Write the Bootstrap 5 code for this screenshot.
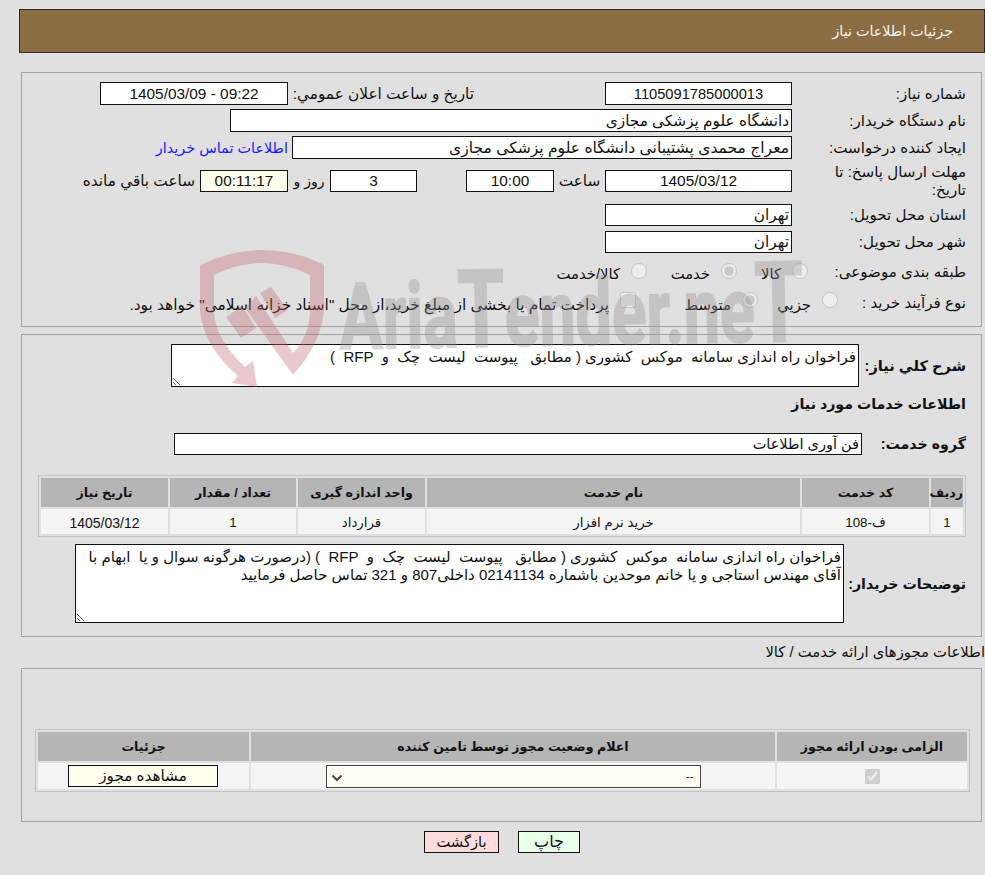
<!DOCTYPE html>
<html lang="fa" dir="rtl">
<head>
<meta charset="utf-8">
<title>جزئیات اطلاعات نیاز</title>
<link href="https://cdn.jsdelivr.net/npm/bootstrap@5.3.0/dist/css/bootstrap.min.css" rel="stylesheet">
<style>
html,body{background:#e0e0e0}
body{font-family:"Liberation Sans","DejaVu Sans",sans-serif;font-size:15.3px;line-height:18px;color:#111;min-height:875px;position:relative;overflow-x:hidden}
.page-wrap{width:985px}
.top-bar{margin:9px 0 19px 0;height:44px;width:966px;background:#8b6d43;border:1px solid #2b2b2b;color:#f4f4f4;padding-right:31px;display:flex;align-items:center;font-size:14.3px}
.sheet{width:961px;margin-right:3px;border:1px solid #a3a3a3;padding-right:15px}
.sheet-a{height:255px;padding-top:9px;margin-bottom:7px}
.sheet-b{height:303px;margin-bottom:7px;padding-top:9px}
.sheet-c{height:154px;margin-bottom:9px;padding:60px 11px 0 0}
.ln{display:flex;align-items:center;height:23px;margin-bottom:4px}
.ln-h{height:22px;margin-bottom:5px}
.tag{width:174px;flex:none;white-space:nowrap;font-size:15.1px}
.box{background:#fff;border:1px solid #111;height:100%;display:flex;align-items:center;padding:0 2px;flex:none;white-space:nowrap;overflow:hidden}
.box-c{justify-content:center;font-size:14.67px}
.dt{font-size:15.4px}
.w187{width:187px}.w188{width:188px}.w562{width:562px}.w500{width:500px;font-size:15.55px}.w88{width:88px}.w87{width:87px}
.cream{background:#ffffee}
.gap131{margin-right:131px;width:181px;flex:none;margin-left:5px;white-space:nowrap}
.hint{color:#1a1aff;margin-right:4px;text-decoration:none;white-space:nowrap;font-size:14.4px}
.deadline{height:22px;margin-top:11px;margin-bottom:12px}
.deadline .tag{white-space:normal;padding-left:30px}
.sp51,.sp49,.sp42{flex:none;text-align:center;white-space:nowrap}
.sp51{width:51px}.sp49{width:49px}.sp42{width:42px;font-size:14px}
.tail{margin-right:5px;white-space:nowrap}
.opt-row{display:flex;align-items:center;height:20px}
.o1{margin-top:9px}
.o2{margin-top:11px}
.t158{width:158px}.t128{width:128px}
.cell{display:flex;align-items:flex-start;flex:none;gap:11px;white-space:nowrap;font-size:14.8px;height:20px}
.cell input{margin:1px 0 0;width:16px;height:16px;flex:none}
.o2 .cell input{margin-top:-1px}
.cell span{margin-top:3px}
.cell .pay{font-size:15.4px}
.c71{width:71px}.c90{width:90px}.c80{width:80px}.c122{width:122px}
.sum{display:flex;align-items:center;height:43px}
.sum-t{width:107px;flex:none;font-weight:700;font-size:14.2px;white-space:nowrap}
.sum .sum-t{font-size:14.6px}
textarea.pad{background:#fff;border:1px solid #111;border-radius:0;font-family:inherit;font-size:15px;line-height:18px;color:#111;padding:3px 2px 0;display:block;white-space:pre-wrap;outline:0}
.ta1{width:688px;height:43px}
.ta2{width:769px;height:79px}
.head-b{font-weight:700;font-size:14.2px;margin:7px 0 19px;height:20px;display:flex;align-items:center}
.group{display:flex;align-items:center;height:22px;margin-bottom:20px}
.group .sum-t{width:104px}
.w688{width:688px;font-size:14.5px}
.grid-t{border-collapse:separate;border-spacing:2px;border:1px solid #c4c4c4;text-align:center;table-layout:fixed;margin:0;font-size:13.33px}
.grid-t th{background:#b5b5b5;height:29px;font-weight:700;padding:1px 0 0;color:#111;font-size:12.6px}
.grid-t td{background:#f5f5f5;height:25px;padding:2px 0 0;color:#111;vertical-align:middle}
.t1 td:last-child{font-size:14px}
.t1{width:928px}
.t2{width:935px}
.t2 td{height:26px;padding:0}
.t2 td:last-child{padding-right:1px}
.t2 input{width:15px;height:15px;margin:0;vertical-align:middle}
.buyer{display:flex;align-items:center;margin-top:7px}
.buyer .sum-t{width:122px}
.cap{height:16px;margin-bottom:8px;display:flex;align-items:center;white-space:nowrap;font-size:14.8px}
.pick{width:375px;height:23px;background:#fffff3 url("data:image/svg+xml,%3Csvg xmlns='http://www.w3.org/2000/svg' width='12' height='8'%3E%3Cpath d='M1.5 1.5 6 6l4.5-4.5' fill='none' stroke='%23444' stroke-width='2'/%3E%3C/svg%3E") no-repeat 4px 8px;appearance:none;border:1px solid #444;color:#111;font-size:11.5px;border-radius:0;font-family:inherit;display:block;margin:0 auto;padding:0 6px}
.view{width:150px;height:22px;background:#ffffee;border:1px solid #111;margin:0 auto;display:block;padding:0;border-radius:0;font-size:15.2px;line-height:18px;color:#111}
.acts{display:flex;gap:19px;padding-right:405px}
.act{height:22px;border:1px solid #111;border-radius:0;padding:0;font-size:14.67px;line-height:18px;color:#111}
.act-p{width:62px;background:#eaffea;font-size:16px}
.act-b{width:75px;background:#ffdcdc}
.stamp{position:absolute;left:190px;top:245px;pointer-events:none;z-index:5}
</style>
</head>
<body>
<div class="page-wrap">
  <div class="top-bar"><span>جزئیات اطلاعات نیاز</span></div>

  <div class="sheet sheet-a">
    <div class="ln"><div class="tag">شماره نیاز:</div><div class="box box-c w187">1105091785000013</div><div class="gap131">تاریخ و ساعت اعلان عمومي:</div><div class="box box-c dt w188">09:22 - 1405/03/09</div></div>
    <div class="ln"><div class="tag">نام دستگاه خریدار:</div><div class="box w562">دانشگاه علوم پزشکی مجازی</div></div>
    <div class="ln"><div class="tag">ایجاد کننده درخواست:</div><div class="box w500">معراج محمدی پشتیبانی دانشگاه علوم پزشکی مجازی</div><a class="hint" href="#">اطلاعات تماس خریدار</a></div>
    <div class="ln deadline"><div class="tag">مهلت ارسال پاسخ: تا تاریخ:</div><div class="box box-c dt w187">1405/03/12</div><span class="sp51">ساعت</span><div class="box box-c dt w88">10:00</div><span class="sp49"></span><div class="box box-c dt w87">3</div><span class="sp42">روز و</span><div class="box box-c dt w88 cream">00:11:17</div><span class="tail">ساعت باقي مانده</span></div>
    <div class="ln ln-h"><div class="tag">استان محل تحویل:</div><div class="box w187">تهران</div></div>
    <div class="ln ln-h"><div class="tag">شهر محل تحویل:</div><div class="box w187">تهران</div></div>
    <div class="opt-row o1"><div class="tag t158">طبقه بندی موضوعی:</div><label class="cell c71"><input type="radio" disabled name="kind"><span>کالا</span></label><label class="cell c90"><input type="radio" disabled checked name="kind"><span>خدمت</span></label><label class="cell"><input type="radio" disabled name="kind"><span>کالا/خدمت</span></label></div>
    <div class="opt-row o2"><div class="tag t128">نوع فرآیند خرید :</div><label class="cell c80"><input type="radio" disabled name="proc"><span>جزيي</span></label><label class="cell c122"><input type="radio" disabled checked name="proc"><span>متوسط</span></label><label class="cell"><input type="checkbox" disabled><span class="pay">پرداخت تمام یا بخشی از مبلغ خرید،از محل "اسناد خزانه اسلامی" خواهد بود.</span></label></div>
  </div>

  <div class="sheet sheet-b">
    <div class="sum"><div class="sum-t">شرح کلي نیاز:</div><textarea class="pad ta1" readonly>فراخوان راه اندازی سامانه  موکس  کشوری ( مطابق   پیوست  لیست  چک  و  RFP  )</textarea></div>
    <div class="head-b">اطلاعات خدمات مورد نیاز</div>
    <div class="group"><div class="sum-t">گروه خدمت:</div><div class="box w688">فن آوری اطلاعات</div></div>
    <table class="grid-t t1">
      <colgroup><col style="width:32px"><col style="width:127px"><col style="width:373px"><col style="width:127px"><col style="width:126px"><col></colgroup>
      <tr><th>ردیف</th><th>کد خدمت</th><th>نام خدمت</th><th>واحد اندازه گیری</th><th>تعداد / مقدار</th><th>تاریخ نیاز</th></tr>
      <tr><td>1</td><td>ف-108</td><td>خرید نرم افزار</td><td>قرارداد</td><td>1</td><td>1405/03/12</td></tr>
    </table>
    <div class="buyer"><div class="sum-t">توضیحات خریدار:</div><textarea class="pad ta2" readonly>فراخوان راه اندازی سامانه  موکس  کشوری ( مطابق   پیوست  لیست  چک  و  RFP  ) (درصورت هرگونه سوال و یا  ابهام با آقای مهندس استاجی و یا خانم موحدین باشماره 02141134 داخلی807 و 321 تماس حاصل فرمایید</textarea></div>
  </div>

  <div class="cap">اطلاعات مجوزهای ارائه خدمت / کالا</div>
  <div class="sheet sheet-c">
    <table class="grid-t t2">
      <colgroup><col style="width:190px"><col style="width:524px"><col></colgroup>
      <tr><th>الزامی بودن ارائه مجوز</th><th>اعلام وضعیت مجوز توسط تامین کننده</th><th>جزئیات</th></tr>
      <tr><td><input type="checkbox" checked disabled></td><td><select class="pick"><option>--</option></select></td><td><button type="button" class="view">مشاهده مجوز</button></td></tr>
    </table>
  </div>
  <div class="acts"><button type="button" class="act act-p">چاپ</button><button type="button" class="act act-b">بازگشت</button></div>
</div>
<svg class="stamp" width="700" height="145" viewBox="190 245 700 145" aria-hidden="true">
  <g opacity=".35">
    <path fill="#c3686e" d="M200 265Q232 250 262 250Q295 250 324 265L324 312Q320 345 293 375L245 308L256 296L293 353Q310 335 310 310L310 275Q285 263 262 263Q238 263 214 275L214 312Q216 340 245 367L253 361L257 387L232 383L238 376Q205 348 200 312Z"/>
    <path fill="#c3686e" d="M226 317L242 306L256 328L241 338Z"/>
    <path fill="#c3686e" d="M260 293L271 287L288 310L275 318Z"/>
    <text fill="#939393" stroke="#939393" stroke-width="2" font-family="Roboto" font-weight="700" font-size="92" direction="ltr" transform="translate(340 349) rotate(-1) scale(.7 1)">Aria<tspan font-size="108">T</tspan>ender.ne<tspan font-size="112">T</tspan></text>
  </g>
</svg>
</body>
</html>
